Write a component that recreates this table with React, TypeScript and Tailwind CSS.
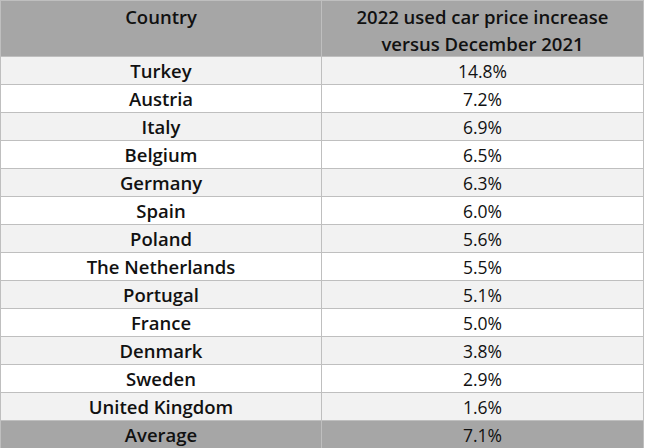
import React from 'react';

const rows = [
  { country: 'Turkey', value: '14.8%' },
  { country: 'Austria', value: '7.2%' },
  { country: 'Italy', value: '6.9%' },
  { country: 'Belgium', value: '6.5%' },
  { country: 'Germany', value: '6.3%' },
  { country: 'Spain', value: '6.0%' },
  { country: 'Poland', value: '5.6%' },
  { country: 'The Netherlands', value: '5.5%' },
  { country: 'Portugal', value: '5.1%' },
  { country: 'France', value: '5.0%' },
  { country: 'Denmark', value: '3.8%' },
  { country: 'Sweden', value: '2.9%' },
  { country: 'United Kingdom', value: '1.6%' },
];

export default function App() {
  return (
    <div className="w-[646px] h-[448px] bg-white text-[#111] overflow-hidden" style={{ fontFamily: '"Open Sans", "Liberation Sans", sans-serif' }}>
      <div className="w-[644px] border-l border-t border-[#bfbfbf]">
        <div className="grid grid-cols-[321px_322px] h-[56px] bg-[#a6a6a6] border-b border-[#bfbfbf] text-[18.5px] font-semibold">
          <div className="border-r border-[#bfbfbf] text-center leading-[27px] pt-[2px]">Country</div>
          <div className="border-r border-[#bfbfbf] text-center leading-[27px] pt-[2px]">
            2022 used car price increase
            <br />
            versus December 2021
          </div>
        </div>
        {rows.map((row, index) => (
          <div
            key={row.country}
            className={`grid grid-cols-[321px_322px] h-[28px] border-b border-[#bfbfbf] ${index % 2 === 0 ? 'bg-[#f2f2f2]' : 'bg-white'}`}
          >
            <div className="border-r border-[#bfbfbf] flex items-center justify-center font-semibold text-[18.5px]">{row.country}</div>
            <div className="border-r border-[#bfbfbf] flex items-center justify-center text-[17.5px]">{row.value}</div>
          </div>
        ))}
        <div className="grid grid-cols-[321px_322px] h-[28px] bg-[#a6a6a6] border-b border-[#bfbfbf]">
          <div className="border-r border-[#bfbfbf] flex items-center justify-center font-semibold text-[18.5px]">Average</div>
          <div className="border-r border-[#bfbfbf] flex items-center justify-center text-[17.5px]">7.1%</div>
        </div>
      </div>
    </div>
  );
}
